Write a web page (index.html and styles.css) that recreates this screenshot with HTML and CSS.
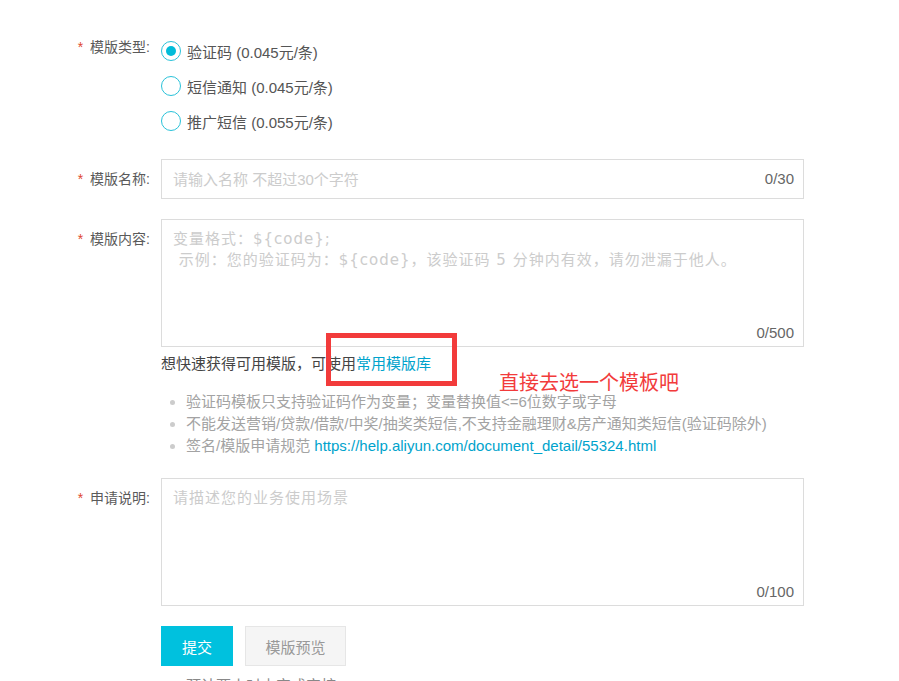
FILE: index.html
```html
<!DOCTYPE html>
<html>
<head>
  <title>添加模版</title>
  <meta charset="utf-8">
  <link rel="stylesheet" href="styles.css">
</head>
<body>
  <div class="page">

    <!-- 模版类型 -->
    <div class="form-row">
      <div class="form-label label-up"><span class="req">*</span>模版类型:</div>
      <div class="radio-group">
        <label class="radio-item"><span class="radio checked"></span>验证码 (0.045元/条)</label>
        <label class="radio-item"><span class="radio"></span>短信通知 (0.045元/条)</label>
        <label class="radio-item"><span class="radio"></span>推广短信 (0.055元/条)</label>
      </div>
    </div>

    <!-- 模版名称 -->
    <div class="form-row row-name">
      <div class="form-label"><span class="req">*</span>模版名称:</div>
      <div class="field">
        <input class="text-input" type="text" placeholder="请输入名称 不超过30个字符">
        <span class="counter counter-mid">0/30</span>
      </div>
    </div>

    <!-- 模版内容 -->
    <div class="form-row row-content">
      <div class="form-label"><span class="req">*</span>模版内容:</div>
      <div class="field">
        <textarea class="text-area" placeholder="变量格式：${code};&#10; 示例：您的验证码为：${code}，该验证码 5 分钟内有效，请勿泄漏于他人。"></textarea>
        <span class="counter">0/500</span>
      </div>
    </div>

    <div class="under-field">
      <p class="helper">想快速获得可用模版，可使用<a href="#">常用模版库</a></p>
      <ul class="tips">
        <li>验证码模板只支持验证码作为变量；变量替换值&lt;=6位数字或字母</li>
        <li>不能发送营销/贷款/借款/中奖/抽奖类短信,不支持金融理财&amp;房产通知类短信(验证码除外)</li>
        <li>签名/模版申请规范 <a href="#">https://help.aliyun.com/document_detail/55324.html</a></li>
      </ul>
    </div>

    <!-- 申请说明 -->
    <div class="form-row row-desc">
      <div class="form-label"><span class="req">*</span>申请说明:</div>
      <div class="field">
        <textarea class="text-area" placeholder="请描述您的业务使用场景"></textarea>
        <span class="counter">0/100</span>
      </div>
    </div>

    <div class="under-field actions">
      <button class="btn btn-primary">提交</button>
      <button class="btn btn-default">模版预览</button>
    </div>

    <div class="under-field footnote">预计两小时内完成审核</div>

    <!-- 标注 -->
    <div class="mark-box"></div>
    <div class="mark-text">直接去选一个模板吧</div>
  </div>
</body>
</html>
```

FILE: styles.css
```css
body {
  margin: 0;
  font-family: "Liberation Sans", "Noto Sans CJK SC", sans-serif;
  color: #555;
  background: #fff;
}

.page {
  position: relative;
  padding: 41px 0 0 0;
  height: 640px;
  overflow: hidden;
}

.form-row {
  display: flex;
  align-items: flex-start;
}

.form-label {
  width: 161px;
  box-sizing: border-box;
  text-align: right;
  padding-right: 11px;
  padding-top: 10px;
  font-size: 14px;
  line-height: 20px;
  color: #5a5a5a;
  white-space: nowrap;
}

.label-up {
  padding-top: 0;
  margin-top: -4px;
}

.req {
  color: #e0472f;
  margin-right: 7px;
}

.radio-group {
  display: flex;
  flex-direction: column;
  gap: 15px;
}

.radio-item {
  display: flex;
  align-items: center;
  height: 20px;
  font-size: 15px;
  color: #555;
}

.radio {
  width: 18px;
  height: 18px;
  border: 1px solid #29c2d9;
  border-radius: 50%;
  margin-right: 6px;
  display: flex;
  align-items: center;
  justify-content: center;
}

.radio.checked::after {
  content: "";
  width: 10px;
  height: 10px;
  border-radius: 50%;
  background: #00bcd9;
}

.field {
  position: relative;
  width: 643px;
}

.row-name {
  margin-top: 28px;
}

.row-content {
  margin-top: 20px;
}

.row-desc {
  margin-top: 21px;
}

.text-input,
.text-area {
  display: block;
  width: 100%;
  box-sizing: border-box;
  border: 1px solid #dcdcdc;
  outline: none;
  color: #555;
  background: #fff;
}

.text-input {
  height: 40px;
  padding: 0 60px 0 11px;
  font-family: "Liberation Sans", "Noto Sans CJK SC", sans-serif;
  font-size: 15px;
}

.text-area {
  height: 128px;
  padding: 9px 11px;
  resize: none;
  font-family: "DejaVu Sans", "Noto Sans CJK SC", sans-serif;
  font-size: 15px;
  letter-spacing: 1px;
  line-height: 21px;
}

.text-input::placeholder,
.text-area::placeholder {
  color: #ccc;
}

.counter {
  position: absolute;
  right: 10px;
  bottom: 4px;
  font-size: 15px;
  line-height: 20px;
  color: #666;
}

.counter-mid {
  bottom: 10px;
}

.under-field {
  padding-left: 161px;
}

.helper {
  margin: 7px 0 0 0;
  font-size: 15px;
  line-height: 20px;
  color: #444;
}

.helper a,
.tips a {
  color: #00a3cc;
  text-decoration: none;
}

.tips {
  list-style: none;
  margin: 17px 0 0 0;
  padding: 0;
}

.tips li {
  position: relative;
  padding-left: 25px;
  font-size: 15px;
  line-height: 22px;
  color: #a3a3a3;
  white-space: nowrap;
}

.tips li::before {
  content: "";
  position: absolute;
  left: 9px;
  top: 9px;
  width: 5px;
  height: 5px;
  border-radius: 50%;
  background: #ccc;
}

.actions {
  display: flex;
  gap: 12px;
  margin-top: 20px;
}

.btn {
  height: 40px;
  border: none;
  font-family: "Liberation Sans", "Noto Sans CJK SC", sans-serif;
  font-size: 15px;
  cursor: pointer;
}

.btn-primary {
  width: 72px;
  background: #00c1de;
  color: #fff;
}

.btn-default {
  width: 101px;
  background: #f5f5f5;
  border: 1px solid #e6e6e6;
  color: #999;
}

.footnote {
  margin-top: 10px;
  padding-left: 186px;
  font-size: 15px;
  line-height: 20px;
  color: #888;
}

.mark-box {
  position: absolute;
  left: 326px;
  top: 333px;
  width: 121px;
  height: 43px;
  border: 5px solid #f23b3b;
}

.mark-text {
  position: absolute;
  left: 499px;
  top: 370px;
  font-size: 20px;
  line-height: 24px;
  color: #f23b3b;
  font-family: "Noto Sans CJK SC", sans-serif;
}
```
